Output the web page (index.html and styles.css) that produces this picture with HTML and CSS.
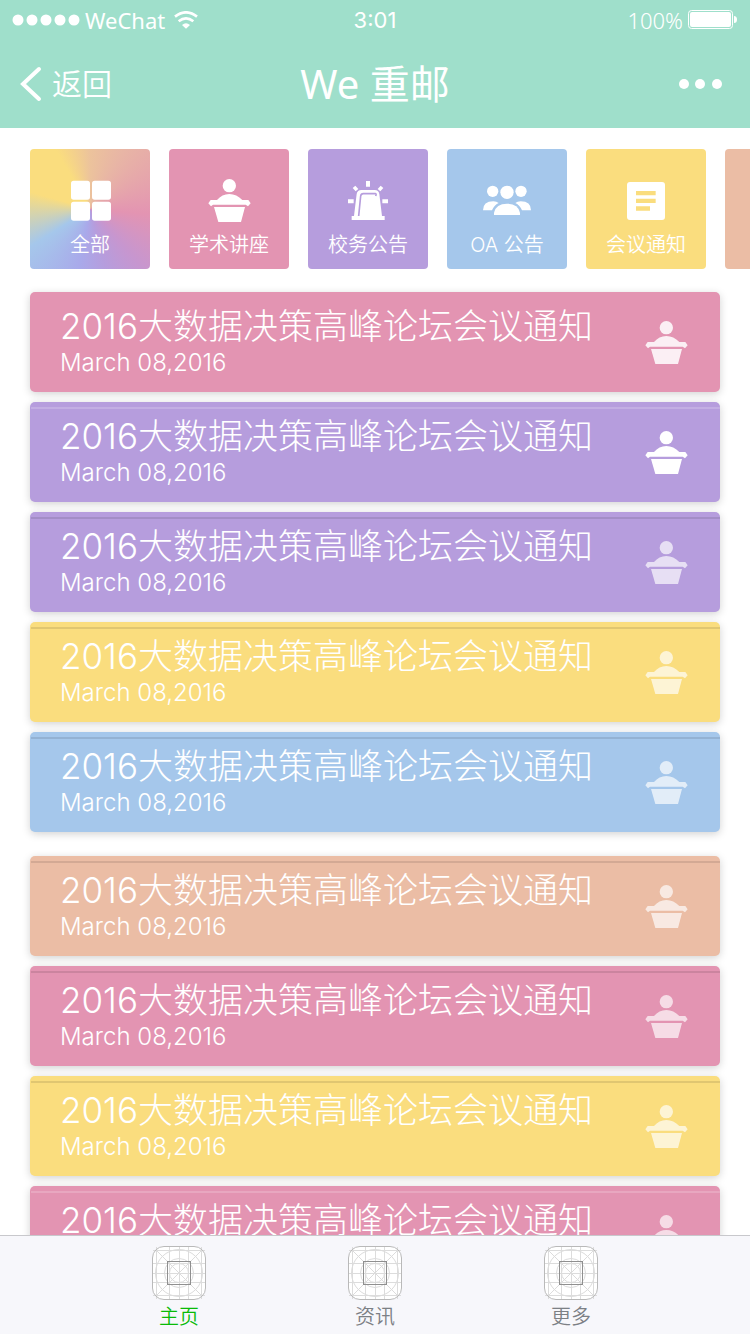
FILE: index.html
```html
<!DOCTYPE html>
<html lang="zh-CN">
<head>
<meta charset="utf-8">
<meta name="viewport" content="width=device-width, initial-scale=1">
<title>We 重邮</title>
<link rel="stylesheet" href="styles.css">
</head>
<body>
<svg class="sprite" aria-hidden="true">
  <symbol id="podium" viewBox="126 102 144 144">
    <circle cx="199" cy="128" r="20"/>
    <path d="M136 181l7-10h19q15-18 37-18t39 18h18l7 10-8 9-7-5h-98l-6 5z"/>
    <path d="M153 192h93l-12 45h-68z"/>
  </symbol>
  <symbol id="grid-guide" viewBox="0 0 54 54">
    <rect x=".5" y=".5" width="53" height="53" rx="11.5" fill="#fff"/>
    <g fill="none" stroke="#dcdcdc">
      <path d="M4.500 1v52M17.500 1v52M27.500 1v52M36.500 1v52M49.500 1v52M1 4.500h52M1 17.500h52M1 27.500h52M1 36.500h52M1 49.500h52M4 4l46 46M50 4L4 50"/>
      <circle cx="27" cy="27" r="23.500"/>
      <circle cx="27" cy="27" r="14.500"/>
      <circle cx="27" cy="27" r="9.500"/>
    </g>
    <rect x=".5" y=".5" width="53" height="53" rx="11.500" fill="none" stroke="#b9b9b9"/>
    <rect x="15.500" y="15.500" width="23" height="23" fill="none" stroke="#8f8f8f"/>
  </symbol>
</svg>

<header class="header">
  <div class="status">
    <div class="status-side">
      <svg class="signal" viewBox="0 0 68 12"><circle cx="6" cy="6" r="5.500"/><circle cx="20" cy="6" r="5.500"/><circle cx="34" cy="6" r="5.500"/><circle cx="48" cy="6" r="5.500"/><circle cx="62" cy="6" r="5.500"/></svg>
      <span>WeChat</span>
      <svg class="wifi" viewBox="0 0 72 54"><path d="M36 53L24 42q12-10 24 0z"/><path class="arc" d="M3 17q33-26 66 0M14 31q22-18 44 0"/></svg>
    </div>
    <time class="clock">3:01</time>
    <div class="status-side status-right">
      <span>100%</span>
      <svg class="battery" viewBox="0 0 50 20"><rect class="shell" x=".5" y=".5" width="44" height="18" rx="3"/><rect x="2" y="2" width="41" height="15" rx="2"/><path d="M46 6q3 0 3 3.500T46 13z"/></svg>
    </div>
  </div>
  <nav class="navbar">
    <a class="back" href="#"><svg class="chevron" viewBox="0 0 22 36"><path d="M19 3L3 18l16 15"/></svg><span>返回</span></a>
    <h1 class="page-title">We 重邮</h1>
    <button class="more" type="button" aria-label="更多选项"><svg viewBox="0 0 44 12"><circle cx="6" cy="6" r="5"/><circle cx="22" cy="6" r="5"/><circle cx="39" cy="6" r="5"/></svg></button>
  </nav>
</header>

<main class="content">
  <div class="tiles">
    <button class="tile tile-all" type="button">
      <svg viewBox="138 112 144 144"><rect x="153" y="123" width="57" height="57" rx="8"/><rect x="216" y="123" width="57" height="57" rx="8"/><rect x="153" y="186" width="57" height="57" rx="8"/><rect x="216" y="186" width="57" height="57" rx="8"/></svg>
      <span>全部</span>
    </button>
    <button class="tile pink" type="button"><svg><use href="#podium"/></svg><span>学术讲座</span></button>
    <button class="tile purple" type="button">
      <svg viewBox="132 111 144 144">
        <path d="M198 123h12v17h-12zM144 178h17v12h-17zM247 178h17v12h-17zM158 144l8-7 9 10-8 7zM250 144l-8-7-9 10 8 7z"/>
        <path d="M155 228h7l8-66q2-12 14-12h40q12 0 14 12l8 66h8v12h-99z"/>
        <path class="gap" d="M176 228l6-60q1-7 8-7h36q3 0 2 4l-1 3"/>
      </svg>
      <span>校务公告</span>
    </button>
    <button class="tile blue" type="button">
      <svg viewBox="549 111 144 144">
        <ellipse cx="578" cy="154" rx="17" ry="17"/><ellipse cx="663" cy="154" rx="17" ry="17"/><circle cx="621" cy="157" r="20"/>
        <path d="M549 211q0-27 31-27 10 0 16 5-14 7-20 22zM693 211q0-27-31-27-10 0-16 5 14 7 20 22z"/>
        <path d="M582 225v-7q6-27 39-27t39 27v7z"/>
      </svg>
      <span>OA 公告</span>
    </button>
    <button class="tile yellow" type="button">
      <svg viewBox="156 111 144 144"><path fill-rule="evenodd" d="M180 126h96q9 0 9 9v96q0 9-9 9h-96q-9 0-9-9v-96q0-9 9-9zM198 153v13h59v-13zM198 176v13h59v-13zM198 199v13h42v-13z"/></svg>
      <span>会议通知</span>
    </button>
    <button class="tile peach" type="button" aria-label="其他"></button>
  </div>

  <div class="group">
    <a class="card pink clear" href="#"><span class="text"><span class="title">2016大数据决策高峰论坛会议通知</span><time class="date" datetime="2016-03-08">March 08,2016</time></span><svg class="mark"><use href="#podium"/></svg></a>
    <a class="card purple lined light solid" href="#"><span class="text"><span class="title">2016大数据决策高峰论坛会议通知</span><time class="date" datetime="2016-03-08">March 08,2016</time></span><svg class="mark"><use href="#podium"/></svg></a>
    <a class="card purple lined" href="#"><span class="text"><span class="title">2016大数据决策高峰论坛会议通知</span><time class="date" datetime="2016-03-08">March 08,2016</time></span><svg class="mark"><use href="#podium"/></svg></a>
    <a class="card yellow lined" href="#"><span class="text"><span class="title">2016大数据决策高峰论坛会议通知</span><time class="date" datetime="2016-03-08">March 08,2016</time></span><svg class="mark"><use href="#podium"/></svg></a>
    <a class="card blue lined" href="#"><span class="text"><span class="title">2016大数据决策高峰论坛会议通知</span><time class="date" datetime="2016-03-08">March 08,2016</time></span><svg class="mark"><use href="#podium"/></svg></a>
  </div>
  <div class="group">
    <a class="card peach lined" href="#"><span class="text"><span class="title">2016大数据决策高峰论坛会议通知</span><time class="date" datetime="2016-03-08">March 08,2016</time></span><svg class="mark"><use href="#podium"/></svg></a>
    <a class="card pink lined" href="#"><span class="text"><span class="title">2016大数据决策高峰论坛会议通知</span><time class="date" datetime="2016-03-08">March 08,2016</time></span><svg class="mark"><use href="#podium"/></svg></a>
    <a class="card yellow lined" href="#"><span class="text"><span class="title">2016大数据决策高峰论坛会议通知</span><time class="date" datetime="2016-03-08">March 08,2016</time></span><svg class="mark"><use href="#podium"/></svg></a>
    <a class="card pink lined light" href="#"><span class="text"><span class="title">2016大数据决策高峰论坛会议通知</span><time class="date" datetime="2016-03-08">March 08,2016</time></span><svg class="mark"><use href="#podium"/></svg></a>
  </div>
</main>

<nav class="tabbar">
  <a class="tab active" href="#"><svg><use href="#grid-guide"/></svg><span>主页</span></a>
  <a class="tab" href="#"><svg><use href="#grid-guide"/></svg><span>资讯</span></a>
  <a class="tab" href="#"><svg><use href="#grid-guide"/></svg><span>更多</span></a>
</nav>
</body>
</html>
```
FILE: styles.css
```css
* { box-sizing: border-box; }

body {
  display: flex;
  flex-direction: column;
  height: 100vh;
  margin: 0;
  background: #fff;
  font-family: Inter, "Noto Sans CJK SC", sans-serif;
}

a { color: inherit; text-decoration: none; }
button { border: 0; padding: 0; font: inherit; color: inherit; cursor: pointer; }
svg { display: block; flex: none; fill: #fff; }
.sprite { position: absolute; width: 0; height: 0; }

.pink { background: #e394b2; }
.purple { background: #b69ddd; }
.blue { background: #a5c7eb; }
.yellow { background: #fadd7e; }
.peach { background: #ebbda5; }

.header { flex: none; background: #9fdfcb; color: #fff; }

.status {
  display: grid;
  grid-template-columns: 1fr auto 1fr;
  align-items: center;
  height: 40px;
  padding: 0 12px;
  font: 22px/40px "Noto Sans", sans-serif;
}
.status-side { display: flex; align-items: center; gap: 5px; }
.status-right { justify-content: flex-end; font-weight: 300; }
.clock { font-family: Inter, sans-serif; }
.signal { width: 68px; height: 12px; }
.wifi { width: 24px; height: 18px; margin-left: 4px; }
.arc { fill: none; stroke: #fff; stroke-width: 8; }
.battery { width: 50px; height: 20px; }
.shell { fill: none; stroke: #fff; }

.navbar {
  display: grid;
  grid-template-columns: 1fr auto 1fr;
  align-items: center;
  height: 88px;
  padding: 0 20px;
}
.back { display: flex; align-items: center; gap: 10px; font-size: 30px; font-weight: 350; line-height: 40px; }
.chevron { width: 22px; height: 36px; }
.chevron path { fill: none; stroke: #fff; stroke-width: 4; stroke-linecap: round; }
.page-title { margin: 0; font: 400 40px/60px "Noto Sans", "Noto Sans CJK SC", sans-serif; }
.more { justify-self: end; padding: 0 8px; background: none; }
.more svg { width: 44px; height: 12px; }

.content {
  flex: 1;
  min-height: 0;
  overflow: hidden auto;
  scrollbar-width: none;
  padding-top: 21px;
}

.tiles { display: flex; gap: 19px; padding-left: 30px; overflow: hidden; }
.tile {
  display: flex;
  flex: none;
  flex-direction: column;
  align-items: center;
  gap: 8px;
  width: 120px;
  height: 120px;
  padding-top: 28px;
  border-radius: 4px;
  color: #fff;
  font-size: 20px;
  font-weight: 350;
  line-height: 24px;
}
.tile svg { width: 48px; height: 48px; }
.tile-all {
  background: conic-gradient(from 0deg, #ecc39c 0deg, #e8b5a5 30deg, #e394b2 95deg, #c796cf 138deg, #b69ddd 165deg, #a9a9ea 190deg, #a5c7eb 238deg, #fadd7e 286deg, #fadd7e 330deg, #ecc39c 360deg);
}
.gap { fill: none; stroke: #b69ddd; stroke-width: 5; }

.group { display: flex; flex-direction: column; gap: 10px; padding: 23px 30px 1px; }
.card {
  position: relative;
  display: flex;
  align-items: center;
  justify-content: space-between;
  padding: 12px 30px 14px;
  border-radius: 5px;
  box-shadow: 0 2px 8px rgba(0, 0, 0, .18);
  color: #fff;
  font-weight: 300;
}
.lined::before {
  content: "";
  position: absolute;
  top: 5px;
  left: 1px;
  right: 0;
  height: 2px;
  background: rgba(0, 0, 0, .1);
}
.light::before { background: rgba(255, 255, 255, .18); }
.text { display: flex; flex-direction: column; }
.title { font-size: 35px; line-height: 44px; white-space: nowrap; }
.date { font-size: 24px; line-height: 30px; }
.mark { width: 48px; height: 48px; margin-top: 4px; opacity: .68; }
.clear .mark { opacity: .86; }
.solid .mark { opacity: 1; }

.tabbar {
  display: grid;
  grid-template-columns: repeat(3, 1fr);
  flex: none;
  padding: 10px 81px 5px;
  border-top: 1px solid #c8c8cc;
  background: #f7f7fb;
}
.tab {
  display: flex;
  flex-direction: column;
  align-items: center;
  gap: 5px;
  color: #7c8085;
  font-size: 20px;
  font-weight: 350;
  line-height: 24px;
}
.tab svg { width: 54px; height: 54px; }
.active { color: #09bb07; }
```
